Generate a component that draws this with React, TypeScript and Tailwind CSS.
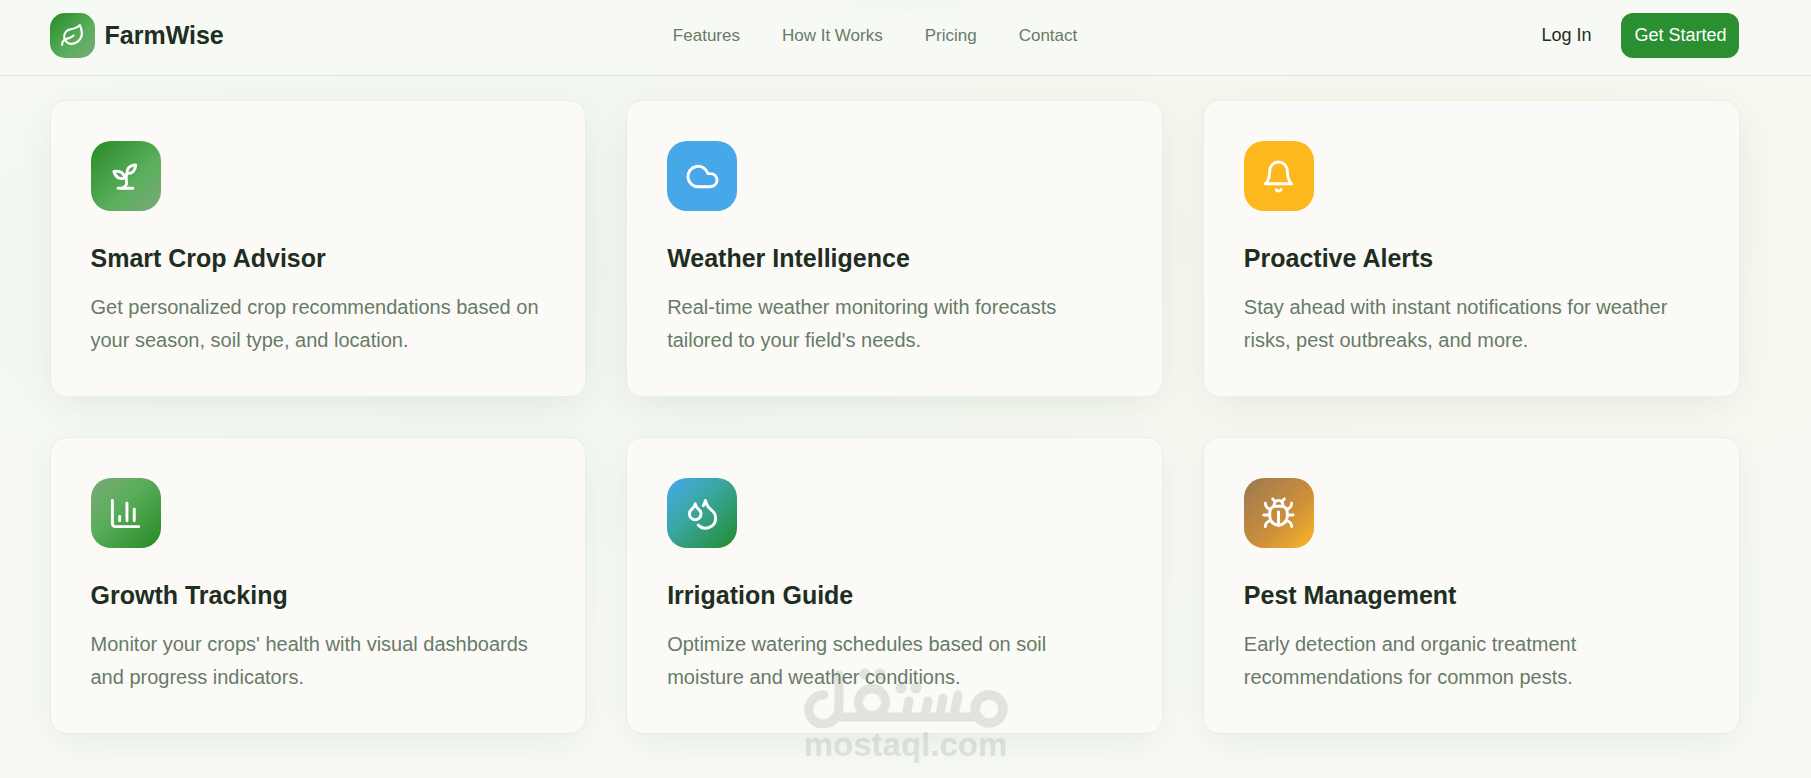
import { ReactNode } from "react";
import { Bug, ChartColumn, Cloud, Droplets, Leaf } from "lucide-react";

type IconProps = { className?: string };

function StrokeIcon({ className, children }: IconProps & { children: ReactNode }) {
  return (
    <svg
      viewBox="0 0 24 24"
      fill="none"
      stroke="currentColor"
      strokeWidth="2"
      strokeLinecap="round"
      strokeLinejoin="round"
      aria-hidden="true"
      className={className}
    >
      {children}
    </svg>
  );
}

function SproutIcon({ className }: IconProps) {
  return (
    <StrokeIcon className={className}>
      <path d="M7 20h10" />
      <path d="M10 20c5.5-2.5.8-6.4 3-10" />
      <path d="M9.5 9.4c1.1.8 1.8 2.2 2.3 3.7-2 .4-3.5.4-4.8-.3-1.2-.6-2.3-1.9-3-4.2 2.8-.5 4.4 0 5.5.8z" />
      <path d="M14.1 6a7 7 0 0 0-1.1 4c1.9-.1 3.3-.6 4.3-1.4 1-1 1.6-2.3 1.7-4.6-2.7.1-4 1-4.9 2z" />
    </StrokeIcon>
  );
}

function BellIcon({ className }: IconProps) {
  return (
    <StrokeIcon className={className}>
      <path d="M6 8a6 6 0 0 1 12 0c0 7 3 9 3 9H3s3-2 3-9" />
      <path d="M10.3 21a1.94 1.94 0 0 0 3.4 0" />
    </StrokeIcon>
  );
}

const navLinks = [
  { label: "Features", href: "#features" },
  { label: "How It Works", href: "#how-it-works" },
  { label: "Pricing", href: "#pricing" },
  { label: "Contact", href: "#contact" },
];

const features = [
  {
    icon: SproutIcon,
    title: "Smart Crop Advisor",
    description: "Get personalized crop recommendations based on your season, soil type, and location.",
    tile: "bg-linear-135 from-[#228b22] via-[#5aae5c] via-60% to-[#7aa878]",
  },
  {
    icon: Cloud,
    title: "Weather Intelligence",
    description: "Real-time weather monitoring with forecasts tailored to your field's needs.",
    tile: "bg-[#47a8e9]",
  },
  {
    icon: BellIcon,
    title: "Proactive Alerts",
    description: "Stay ahead with instant notifications for weather risks, pest outbreaks, and more.",
    tile: "bg-[#fcb81d]",
  },
  {
    icon: ChartColumn,
    title: "Growth Tracking",
    description: "Monitor your crops' health with visual dashboards and progress indicators.",
    tile: "bg-linear-135 from-[#7aa878] via-[#5aae5c] via-40% to-[#228b22]",
  },
  {
    icon: Droplets,
    title: "Irrigation Guide",
    description: "Optimize watering schedules based on soil moisture and weather conditions.",
    tile: "bg-linear-135 from-[#47a8f0] via-[#3aa59a] via-45% to-[#228b22]",
  },
  {
    icon: Bug,
    title: "Pest Management",
    description: "Early detection and organic treatment recommendations for common pests.",
    tile: "bg-linear-135 from-[#9a7850] via-[#cf9038] via-60% to-[#fcb81d]",
  },
];

function Navbar() {
  return (
    <header className="border-b border-[#dfe3de] bg-[#f7f9f4] bg-[radial-gradient(ellipse_100px_20px_at_50%_0%,#f0f5f0,transparent)] pr-[22px]">
      <div className="mx-auto flex max-w-[1750px] items-center justify-between px-[30px] pt-[13px] pb-[17px]">
        <a href="#" className="flex items-center gap-[10px]">
          <span className="flex size-[45px] items-center justify-center rounded-[15px] bg-linear-135 from-[#228b22] via-[#5aae5c] via-60% to-[#7aa878]">
            <Leaf className="size-[25px] text-white" />
          </span>
          <span className="text-[25px] font-bold">FarmWise</span>
        </a>
        <nav className="flex items-center gap-[42px] text-[17px] text-[#677b67]">
          {navLinks.map((link) => (
            <a key={link.label} href={link.href}>{link.label}</a>
          ))}
        </nav>
        <div className="flex items-center gap-[15px] text-[18px]">
          <button type="button" className="h-[45px] px-[15px]">Log In</button>
          <button type="button" className="h-[45px] rounded-xl bg-[#2a8f30] px-[13px] text-white">Get Started</button>
        </div>
      </div>
    </header>
  );
}

function Watermark() {
  return (
    <div className="pointer-events-none absolute bottom-[17px] left-1/2 w-[206px] -translate-x-1/2 text-[#8b968b] opacity-22">
      <svg viewBox="0 0 206 60" className="block w-full" fill="none" stroke="currentColor" strokeLinecap="round" aria-hidden="true">
        <path d="M21 27A14.5 14.5 0 1 0 32 50Q36 46 36 40V7M32 49H176" strokeWidth="9" />
        <path d="M106 33L103 47M125 33L122 47M140 30L137 47M155 27L151 47" strokeWidth="9" />
        <circle cx="69" cy="34" r="13.5" strokeWidth="9" />
        <circle cx="186" cy="41" r="14" strokeWidth="9.5" />
        <g fill="currentColor" stroke="none">
          <circle cx="62" cy="6" r="5.5" />
          <circle cx="77" cy="6" r="5.5" />
          <circle cx="98" cy="20" r="5.5" />
          <circle cx="113" cy="20" r="5.5" />
        </g>
      </svg>
      <p className="text-center text-[33px] leading-[33px] font-bold">mostaql.com</p>
    </div>
  );
}

export default function App() {
  return (
    <div className="relative min-h-screen bg-[#f7f9f4] bg-[radial-gradient(ellipse_at_30%_35%,#eef5ee_0%,transparent_50%),radial-gradient(ellipse_at_78%_25%,#f6f6e9_0%,transparent_50%)] font-['Liberation_Sans',Arial,sans-serif] text-[#1f2e22]">
      <Navbar />

      <main id="features" className="pr-[22px]">
        <div className="mx-auto grid max-w-[1750px] grid-cols-3 gap-10 px-[30px] pt-6 pb-11">
          {features.map(({ icon: Icon, title, description, tile }) => (
            <article
              key={title}
              className="rounded-2xl border border-[#e9eee8] bg-[#fbfaf6] px-10 pt-10 pb-[39px] shadow-[0_10px_40px_-10px_rgba(34,80,45,0.11)]"
            >
              <div className={`mb-[30px] flex size-[70px] items-center justify-center rounded-[20px] ${tile}`}>
                <Icon className="size-[35px] text-white" />
              </div>
              <h3 className="mb-[15px] text-[25px] leading-[35px] font-bold">{title}</h3>
              <p className="text-[20px] leading-[33px] text-[#677b67]">{description}</p>
            </article>
          ))}
        </div>
      </main>

      <Watermark />
    </div>
  );
}
